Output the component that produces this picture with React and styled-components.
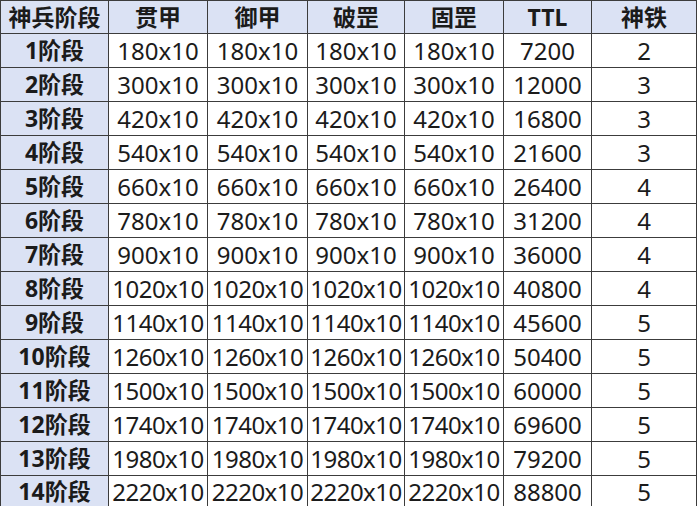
import React from 'react'
import styled, {createGlobalStyle} from 'styled-components'

const GlobalStyle = createGlobalStyle`
  html, body {
    margin: 0;
    padding: 0;
    background: #ffffff;
  }
  body {
    font-family: "Noto Sans", "Noto Sans CJK SC", sans-serif;
    color: #1b1b1b;
  }
`;

// header, 13 full rows, and the last row that the window cuts
const Grid = styled.div`
  display: grid;
  grid-template-columns: 107px 98px 99px 96px 98px 87px 104px;
  grid-template-rows: 32px repeat(13, 33px) 31px;
  gap: 1px;
  padding: 1px 1px 0;
  width: max-content;
  background: #3c3c3c;
`;

const Cell = styled.div`
  display: flex;
  align-items: center;
  justify-content: center;
  background: ${p => (p.$shaded ? '#dbe2f4' : '#ffffff')};
  font-family: "Noto Sans", "Noto Sans CJK SC", sans-serif;
  font-size: ${p => (p.$bold ? '23px' : '24px')};
  line-height: 1;
  font-weight: ${p => (p.$bold ? 700 : 400)};
  white-space: nowrap;
  overflow: hidden;
  letter-spacing: ${p => (p.$tight ? '-0.5px' : '0')};
`;

const headers = ['神兵阶段', '贯甲', '御甲', '破罡', '固罡', 'TTL', '神铁'];

const stages = [
    [180, 7200, 2],
    [300, 12000, 3],
    [420, 16800, 3],
    [540, 21600, 3],
    [660, 26400, 4],
    [780, 31200, 4],
    [900, 36000, 4],
    [1020, 40800, 4],
    [1140, 45600, 5],
    [1260, 50400, 5],
    [1500, 60000, 5],
    [1740, 69600, 5],
    [1980, 79200, 5],
    [2220, 88800, 5],
];

export default function App() {
    return (
        <>
            <GlobalStyle/>
            <Grid>
                {headers.map((h) => (
                    <Cell key={h} $shaded $bold>{h}</Cell>
                ))}
                {stages.map(([base, ttl, iron], i) => {
                    const value = `${base}x10`;
                    const long = value.length > 6;
                    return (
                        <React.Fragment key={i}>
                            <Cell $shaded $bold>{i + 1}阶段</Cell>
                            <Cell $tight={long}>{value}</Cell>
                            <Cell $tight={long}>{value}</Cell>
                            <Cell $tight={long}>{value}</Cell>
                            <Cell $tight={long}>{value}</Cell>
                            <Cell>{ttl}</Cell>
                            <Cell>{iron}</Cell>
                        </React.Fragment>
                    )
                })}
            </Grid>
        </>
    )
}
